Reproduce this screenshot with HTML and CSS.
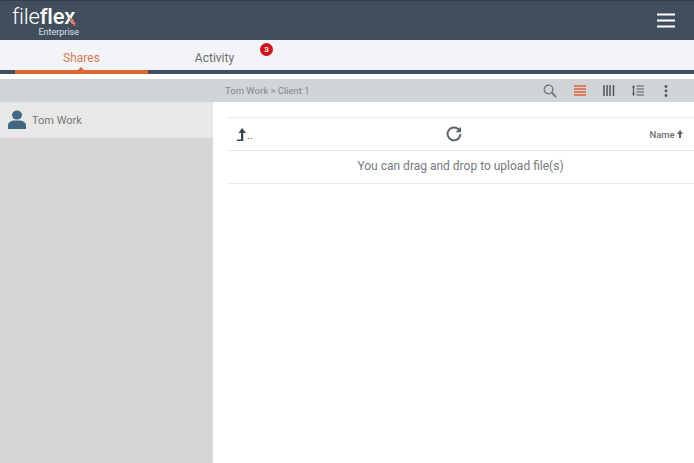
FILE: index.html
```html
<!DOCTYPE html>
<html lang="en">
<head>
    <meta charset="UTF-8">
    <title>FileFlex Enterprise</title>
    <link rel="stylesheet" href="styles.css">
</head>
<body>
    <header class="topbar">
        <div class="logo">
            <div class="logo-name"><span class="logo-file">file</span><span class="logo-flex">flex</span><svg class="logo-tail" width="7" height="8" viewBox="0 0 7 8"><path d="M0 0l5 8h2L2 0z" fill="#e0672f"/></svg></div>
            <div class="logo-sub">Enterprise</div>
        </div>
        <svg class="menu-icon" width="18" height="15" viewBox="0 0 18 15"><path d="M0 1.500h18M0 7.500h18M0 13.500h18" stroke="#fff" stroke-width="2.200"/></svg>
    </header>
    <nav class="tabs">
        <div class="tab tab-active">Shares</div>
        <div class="tab">Activity<span class="badge">3</span></div>
    </nav>
    <div class="tabline"><div class="tabline-active"></div></div>
    <div class="toolbar">
        <div class="crumbs">Tom Work &gt; Client 1</div>
        <div class="tools">
            <svg width="14" height="14" viewBox="0 0 14 14" fill="none" stroke="#6b7278"><circle cx="5.500" cy="5.500" r="4.300" stroke-width="1.200"/><path d="M8.700 8.700l4.400 4.400" stroke-width="1.800"/></svg>
            <svg width="12" height="11" viewBox="0 0 12 11"><path d="M0 1h12M0 4h12M0 7h12M0 10h12" stroke="#e2623a" stroke-width="1.400"/></svg>
            <svg width="12" height="11" viewBox="0 0 12 11"><path d="M1 0v11M4 0v11M7 0v11M10.500 0v11" stroke="#4d565f" stroke-width="1.500"/></svg>
            <svg width="12" height="11" viewBox="0 0 12 11" fill="#4d565f"><path d="M1.500 0l1.500 2.500H0zM1.500 11L0 8.500h3zM.9 2.500h1.200v6H.9z"/><path d="M4.500 1h7.500M4.500 4h7.500M4.500 7h7.500M4.500 10h7.500" stroke="#4d565f"/></svg>
            <svg class="tool-more" width="4" height="12" viewBox="0 0 4 12" fill="#4d565f"><circle cx="2" cy="1.500" r="1.400"/><circle cx="2" cy="6" r="1.400"/><circle cx="2" cy="10.500" r="1.400"/></svg>
        </div>
    </div>
    <div class="content">
        <aside class="sidebar">
            <div class="user">
                <svg width="18" height="20" viewBox="0 0 18 22" preserveAspectRatio="none" fill="#3f6882"><circle cx="9" cy="5.500" r="5"/><path d="M0 21v-4c0-3.500 3-5 5.500-5.500h7c2.500.5 5.500 2 5.500 5.500v4z"/></svg>
                <span>Tom Work</span>
            </div>
        </aside>
        <main class="files">
            <div class="files-head">
                <div class="up">
                    <svg width="11" height="13" viewBox="0 0 11 13" fill="#3b444c"><path d="M6 0l4 5H7.300v8H1v-1.500h4V5H2.500z"/></svg>
                    <span>..</span>
                </div>
                <svg class="refresh" width="16" height="16" viewBox="0 0 16 16" fill="none"><path d="M13.200 4.200A6.400 6.400 0 1 0 14.400 8" stroke="#5a636b" stroke-width="1.900"/><path d="M15 .8v5.400H9.600z" fill="#5a636b"/></svg>
                <div class="sort">Name <svg width="6" height="8" viewBox="0 0 6 8" fill="#5a636b"><path d="M3 0l3 4H4v4H2V4H0z"/></svg></div>
            </div>
            <div class="drop">You can drag and drop to upload file(s)</div>
        </main>
    </div>
</body>
</html>
```

FILE: styles.css
```css
html, body {
    height: 100%;
}
body {
    margin: 0;
    display: flex;
    flex-direction: column;
    font-family: Roboto, "Liberation Sans", sans-serif;
    background-color: #fff;
    overflow: hidden;
}
.topbar {
    height: 40px;
    flex: none;
    display: flex;
    align-items: center;
    justify-content: space-between;
    padding: 0 19px 0 12px;
    background-color: #414e5d;
    border-top: 1px solid #333c47;
    box-sizing: border-box;
}
.logo {
    color: #fff;
    width: 67px;
    padding-top: 3px;
}
.logo-name {
    position: relative;
    font-size: 22px;
    line-height: 20px;
    letter-spacing: -0.2px;
}
.logo-file {
    font-weight: 300;
}
.logo-flex {
    font-weight: 500;
}
.logo-tail {
    position: absolute;
    top: 11px;
    left: 57px;
}
.logo-sub {
    font-size: 9px;
    line-height: 10px;
    text-align: right;
    color: #dfe4e9;
}
.tabs {
    height: 30px;
    flex: none;
    display: flex;
    padding-left: 15px;
    background-color: #f3f4f8;
}
.tab {
    position: relative;
    width: 133px;
    font-size: 12px;
    line-height: 36px;
    text-align: center;
    color: #6a6e72;
}
.tab-active {
    color: #d9794f;
}
.badge {
    position: absolute;
    top: 3px;
    left: 112px;
    width: 13px;
    height: 13px;
    border-radius: 50%;
    background-color: #d80f16;
    color: #fff;
    font-size: 8px;
    font-weight: 700;
    line-height: 13px;
}
.tabline {
    height: 4px;
    flex: none;
    background-color: #414e5d;
}
.tabline-active {
    position: relative;
    width: 133px;
    height: 4px;
    margin-left: 15px;
    background-color: #e0672f;
}
.tabline-active::before {
    content: "";
    position: absolute;
    top: -3px;
    left: 63px;
    border: 3px solid transparent;
    border-top: 0;
    border-bottom-color: #e0672f;
}
.toolbar {
    height: 23px;
    flex: none;
    margin-top: 5px;
    display: flex;
    align-items: center;
    justify-content: space-between;
    padding: 0 26px 0 225px;
    background-color: #d1d4d7;
}
.crumbs {
    font-size: 9.500px;
    color: #82878b;
}
.tools {
    display: flex;
    align-items: center;
    gap: 17px;
}
.tool-more {
    margin-left: 3px;
}
.content {
    flex: 1;
    display: flex;
}
.sidebar {
    width: 213px;
    flex: none;
    background-color: #d5d6d8;
}
.user {
    height: 36px;
    display: flex;
    align-items: center;
    gap: 6px;
    padding-left: 8px;
    background-color: #e8e8e6;
    font-size: 11px;
    color: #75787c;
}
.files {
    flex: 1;
    min-width: 0;
    padding: 15px 0 0 14px;
}
.files-head {
    position: relative;
    height: 32px;
    display: flex;
    align-items: center;
    justify-content: space-between;
    padding: 0 11px 0 9px;
    border-top: 1px solid #ececec;
    border-bottom: 1px solid #e6e6e6;
}
.up {
    display: flex;
    align-items: flex-end;
    font-size: 11px;
    line-height: 10px;
    color: #4d565f;
}
.refresh {
    position: absolute;
    top: 8px;
    left: 219px;
}
.sort {
    font-size: 9.500px;
    font-weight: 500;
    color: #6a7076;
}
.drop {
    height: 32px;
    line-height: 31px;
    text-align: center;
    font-size: 12px;
    color: #75797d;
    border-bottom: 1px solid #ececec;
}
```
